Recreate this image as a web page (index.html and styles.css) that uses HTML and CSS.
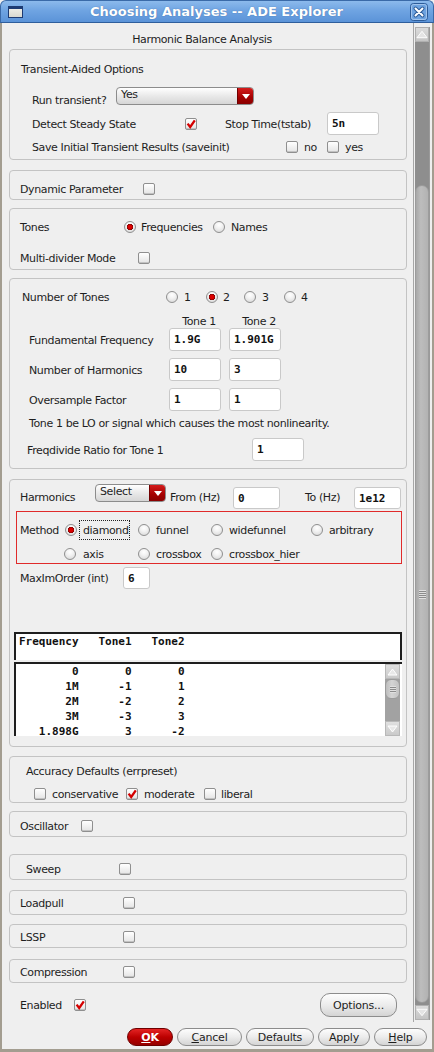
FILE: index.html
```html
<!DOCTYPE html>
<html>
<head>
<meta charset="utf-8">
<title>Choosing Analyses -- ADE Explorer</title>
<link rel="stylesheet" href="styles.css">
</head>
<body>
<div class="window">
  <header class="titlebar">
    <span class="win-icon"></span>
    <span class="title">Choosing Analyses -- ADE Explorer</span>
    <span class="close-btn">
      <svg width="18" height="18" viewBox="0 0 18 18">
        <rect x="0.5" y="0.5" width="17" height="17" rx="3" fill="#6ea3e0" stroke="#2d5c99"/>
        <rect x="1.5" y="1.5" width="15" height="15" rx="2" fill="none" stroke="#b6d1f2" stroke-opacity="0.7"/>
        <path d="M5.5 5.5 L12.5 12.5 M12.5 5.5 L5.5 12.5" stroke="#2d5c99" stroke-width="4" stroke-linecap="round"/>
        <path d="M5.5 5.5 L12.5 12.5 M12.5 5.5 L5.5 12.5" stroke="#ffffff" stroke-width="2" stroke-linecap="round"/>
      </svg>
    </span>
  </header>
  <div class="frame">
    <div class="scrollarea">
      <div class="content">
        <div class="page-title">Harmonic Balance Analysis</div>

        <section class="sec sec-trans">
          <div class="sec-title">Transient-Aided Options</div>
          <div class="row r-run">
            <span class="lbl lbl-low w-run">Run transient?</span>
            <div class="dd dd-yes"><span class="dd-text">Yes</span><span class="dd-btn"><svg width="8" height="5" viewBox="0 0 8 5"><path d="M0 0 H8 L4 5 Z" fill="#fff"/></svg></span></div>
          </div>
          <div class="row r-detect">
            <span class="lbl w-detect">Detect Steady State</span>
            <span class="cb"><svg width="10" height="10" viewBox="0 0 10 10"><path d="M1.6 4.6 L4.2 8 L8.8 1.4" fill="none" stroke="#d40000" stroke-width="2.3"/></svg></span>
            <span class="lbl w-stop">Stop Time(tstab)</span>
            <span class="in w-in52">5n</span>
          </div>
          <div class="row r-save">
            <span class="lbl w-save">Save Initial Transient Results (saveinit)</span>
            <span class="cb"></span>
            <span class="lbl opt w-no">no</span>
            <span class="cb"></span>
            <span class="lbl opt">yes</span>
          </div>
        </section>

        <section class="sec sec-dyn">
          <div class="row pl10">
            <span class="lbl w-dyn">Dynamic Parameter</span>
            <span class="cb"></span>
          </div>
        </section>

        <section class="sec sec-tones">
          <div class="row pl10">
            <span class="lbl w-tones">Tones</span>
            <span class="rb on"></span>
            <span class="lbl opt w-freqs">Frequencies</span>
            <span class="rb"></span>
            <span class="lbl opt">Names</span>
          </div>
          <div class="row pl10 r-multi">
            <span class="lbl w-multi">Multi-divider Mode</span>
            <span class="cb"></span>
          </div>
        </section>

        <section class="sec sec-num">
          <div class="row pl12">
            <span class="lbl w-numt">Number of Tones</span>
            <span class="rb"></span><span class="lbl opt w-n">1</span>
            <span class="rb on"></span><span class="lbl opt w-n2">2</span>
            <span class="rb"></span><span class="lbl opt w-n">3</span>
            <span class="rb"></span><span class="lbl opt w-n2">4</span>
          </div>
          <div class="row r-tonehead">
            <span class="tonehead">Tone 1</span>
            <span class="tonehead">Tone 2</span>
          </div>
          <div class="row r-field">
            <span class="lbl w-field">Fundamental Frequency</span>
            <span class="in w-in52">1.9G</span>
            <span class="in w-in52">1.901G</span>
          </div>
          <div class="row r-field mt7">
            <span class="lbl w-field">Number of Harmonics</span>
            <span class="in w-in52">10</span>
            <span class="in w-in52">3</span>
          </div>
          <div class="row r-field mt7">
            <span class="lbl w-field">Oversample Factor</span>
            <span class="in w-in52">1</span>
            <span class="in w-in52">1</span>
          </div>
          <div class="row r-note">
            <span class="lbl">Tone 1 be LO or signal which causes the most nonlinearity.</span>
          </div>
          <div class="row r-fdiv">
            <span class="lbl w-fdiv">Freqdivide Ratio for Tone 1</span>
            <span class="in w-in52">1</span>
          </div>
        </section>

        <section class="sec sec-harm">
          <div class="row r-harm">
            <span class="lbl lbl-mid w-harm">Harmonics</span>
            <div class="dd dd-sel"><span class="dd-text">Select</span><span class="dd-btn"><svg width="8" height="5" viewBox="0 0 8 5"><path d="M0 0 H8 L4 5 Z" fill="#fff"/></svg></span></div>
            <span class="lbl lbl-mid w-from">From (Hz)</span>
            <span class="in in-mid w-in47">0</span>
            <span class="lbl lbl-mid w-to">To (Hz)</span>
            <span class="in in-mid w-in47">1e12</span>
          </div>
          <div class="method-box">
            <div class="row r-m1">
              <span class="lbl w-method">Method</span>
              <span class="rb on"></span>
              <span class="focus">diamond</span>
              <span class="rb ml8"></span><span class="lbl opt w-m">funnel</span>
              <span class="rb"></span><span class="lbl opt w-wide">widefunnel</span>
              <span class="rb"></span><span class="lbl opt">arbitrary</span>
            </div>
            <div class="row r-m2">
              <span class="rb"></span><span class="lbl opt-axis w-axis">axis</span>
              <span class="rb"></span><span class="lbl opt w-m">crossbox</span>
              <span class="rb"></span><span class="lbl opt">crossbox_hier</span>
            </div>
          </div>
          <div class="row r-maxim">
            <span class="lbl w-maxim">MaxImOrder (int)</span>
            <span class="in in-small">6</span>
          </div>
          <div class="tbl-head">Frequency   Tone1   Tone2</div>
          <div class="tbl-body">
<pre class="tbl-rows">        0       0       0
       1M      -1       1
       2M      -2       2
       3M      -3       3
   1.898G       3      -2</pre>
            <div class="mini-scroll">
              <div class="mini-arrow"><svg width="11" height="8" viewBox="0 0 11 8"><path d="M1 7 L5.5 1 L10 7 Z" fill="#e8e8e8" stroke="#fff"/></svg></div>
              <div class="mini-thumb"><span class="grip"></span></div>
              <div class="mini-track"></div>
              <div class="mini-arrow"><svg width="11" height="8" viewBox="0 0 11 8"><path d="M1 1 L5.5 7 L10 1 Z" fill="#e8e8e8" stroke="#fff"/></svg></div>
            </div>
          </div>
        </section>

        <section class="sec sec-acc">
          <div class="row pl16">
            <span class="lbl">Accuracy Defaults (errpreset)</span>
          </div>
          <div class="row r-acc">
            <span class="cb"></span><span class="lbl opt w-cons">conservative</span>
            <span class="cb"><svg width="10" height="10" viewBox="0 0 10 10"><path d="M1.6 4.6 L4.2 8 L8.8 1.4" fill="none" stroke="#d40000" stroke-width="2.3"/></svg></span><span class="lbl opt w-mod">moderate</span>
            <span class="cb"></span><span class="lbl opt-lib">liberal</span>
          </div>
        </section>

        <section class="sec sec-osc">
          <div class="row pl10">
            <span class="lbl w-osc">Oscillator</span>
            <span class="cb"></span>
          </div>
        </section>

        <section class="sec sec-sweep">
          <div class="row pl16">
            <span class="lbl w-sweep">Sweep</span>
            <span class="cb"></span>
          </div>
        </section>

        <section class="sec sec-load">
          <div class="row pl10">
            <span class="lbl w-simple">Loadpull</span>
            <span class="cb"></span>
          </div>
        </section>

        <section class="sec sec-lssp">
          <div class="row pl10">
            <span class="lbl w-simple">LSSP</span>
            <span class="cb"></span>
          </div>
        </section>

        <section class="sec sec-comp">
          <div class="row pl10">
            <span class="lbl w-simple">Compression</span>
            <span class="cb"></span>
          </div>
        </section>

        <div class="row r-enabled">
          <span class="lbl w-enabled">Enabled</span>
          <span class="cb"><svg width="10" height="10" viewBox="0 0 10 10"><path d="M1.6 4.6 L4.2 8 L8.8 1.4" fill="none" stroke="#d40000" stroke-width="2.3"/></svg></span>
          <button class="btn btn-options">Options...</button>
        </div>
      </div>

      <div class="vscroll">
        <div class="vtrack">
          <div class="varrow"><svg width="13" height="9" viewBox="0 0 13 9"><path d="M1 8 L6.5 1 L12 8 Z" fill="#e4e4e4" stroke="#fff"/></svg></div>
          <div class="vthumb"><span class="grip"></span></div>
          <div class="varrow"><svg width="13" height="9" viewBox="0 0 13 9"><path d="M1 1 L6.5 8 L12 1 Z" fill="#e4e4e4" stroke="#fff"/></svg></div>
        </div>
      </div>
    </div>

    <div class="buttonbar">
      <button class="btn btn-ok"><u>O</u>K</button>
      <button class="btn btn-cancel"><u>C</u>ancel</button>
      <button class="btn btn-defaults">Defaults</button>
      <button class="btn btn-apply">Apply</button>
      <button class="btn btn-help"><u>H</u>elp</button>
    </div>
  </div>
</div>
</body>
</html>
```
FILE: styles.css
```css
* { box-sizing: border-box; }

html, body {
  margin: 0;
  padding: 0;
  width: 434px;
  height: 1052px;
  overflow: hidden;
  background: #efefef;
}

body {
  font-family: "DejaVu Sans", "Liberation Sans", sans-serif;
  font-size: 11px;
  letter-spacing: -0.38px;
  color: #1e1e1e;
}

.window {
  width: 434px;
  height: 1052px;
  display: flex;
  flex-direction: column;
}

/* ---------- title bar ---------- */
.titlebar {
  height: 23px;
  flex: none;
  display: flex;
  align-items: center;
  padding: 0 5px 0 7px;
  background: linear-gradient(#8cbaec 0%, #6fa4e2 45%, #5b93d8 100%);
  border: 1px solid #3a6aa8;
  border-bottom-color: #2f5e9c;
  border-radius: 6px 6px 0 0;
}

.win-icon {
  width: 15px;
  height: 12px;
  flex: none;
  border: 1px solid #1d3b73;
  background: linear-gradient(#1d3b73 0, #1d3b73 2px, #ecece6 2px, #d8d8d0 100%);
}

.title {
  flex: 1;
  text-align: center;
  font-weight: bold;
  font-size: 13px;
  letter-spacing: 0;
  color: #ffffff;
  text-shadow: 0 0 1px rgba(20, 50, 100, 0.5);
}

.close-btn {
  width: 18px;
  height: 18px;
  flex: none;
  display: flex;
}

/* ---------- frame ---------- */
.frame {
  flex: 1;
  display: flex;
  flex-direction: column;
  border-left: 2px solid #a39d90;
  border-right: 2px solid #a39d90;
  border-bottom: 3px solid #a39d90;
  background: #efefef;
}

.scrollarea {
  height: 999px;
  flex: none;
  display: flex;
}

.content {
  width: 411px;
  flex: none;
  padding-left: 7px;
  overflow: hidden;
  display: flex;
  flex-direction: column;
}

.page-title {
  padding: 10px 12px 0 0;
  height: 26px;
  line-height: 14px;
  text-align: center;
  width: 398px;
}

/* ---------- scrollbar ---------- */
.vscroll {
  width: 19px;
  flex: none;
  padding: 4px 2px 2px 1px;
  border-left: 1px solid #a6a6a6;
}

.vtrack {
  height: 100%;
  display: flex;
  flex-direction: column;
  background: #8e8e8e;
  border-right: 1px solid #9a9a9a;
}

.varrow {
  height: 15px;
  flex: none;
  background: linear-gradient(#dcdcdc, #c4c4c4);
  border: 1px solid #b0b0b0;
  display: flex;
  align-items: center;
  justify-content: center;
}

.vthumb {
  flex: 1;
  margin: 143px 0 2px 0;
  background: linear-gradient(90deg, #a8a8a8, #bdbdbd 40%, #b2b2b2);
  border: 1px solid #9c9c9c;
  border-radius: 7px;
  display: flex;
  align-items: center;
  justify-content: center;
}

.grip {
  width: 7px;
  height: 9px;
  background: repeating-linear-gradient(#e0e0e0 0, #e0e0e0 1px, #8c8c8c 1px, #8c8c8c 2px);
}

/* ---------- sections ---------- */
.sec {
  width: 398px;
  flex: none;
  border: 1px solid #c3c3c3;
  border-radius: 4px;
  display: flex;
  flex-direction: column;
}

.row {
  display: flex;
  align-items: center;
  height: 14px;
  line-height: 14px;
  flex: none;
}

.lbl {
  flex: none;
  white-space: nowrap;
  height: 14px;
  line-height: 12px;
  padding-top: 2px;
}

.pl10 { padding-left: 10px; }
.pl12 { padding-left: 12px; }
.pl16 { padding-left: 16px; }
.mt7 { margin-top: 7px; }
.ml8 { margin-left: 8px; }

.opt { margin-left: 6px; }

/* section 1 */
.sec-trans { height: 111px; padding-top: 11px; }
.sec-title { height: 16px; line-height: 16px; padding-left: 11px; padding-top: 1px; }
.r-run { margin-top: 10px; height: 18px; padding-left: 22px; align-items: flex-start; }
.lbl-low { margin-top: 6px; }
.w-run { width: 84px; }
.r-detect { margin-top: 7px; height: 23px; padding-left: 22px; }
.w-detect { width: 153px; }
.w-stop { width: 102px; margin-left: 28px; }
.r-save { margin-top: 5px; padding-left: 22px; }
.w-save { width: 254px; }
.w-no { width: 23px; }

/* dropdowns */
.dd {
  display: flex;
  height: 18px;
  flex: none;
  border: 1px solid #8c8c8c;
  border-radius: 4px;
  background: linear-gradient(#ffffff, #e9e9e9 50%, #d6d6d6);
  overflow: hidden;
}
.dd-text { flex: 1; padding-left: 4px; line-height: 14px; }
.dd-btn {
  width: 16px;
  flex: none;
  display: flex;
  align-items: center;
  justify-content: center;
  background: linear-gradient(#d41c1c, #a40000 60%, #8a0000);
  border-left: 1px solid #700000;
}
.dd-yes { width: 138px; }
.dd-sel { width: 71px; }

/* inputs */
.in {
  flex: none;
  height: 23px;
  line-height: 22px;
  padding-left: 4px;
  background: #ffffff;
  border: 1px solid #c9c9c9;
  border-radius: 3px;
  font-family: "DejaVu Sans Mono", "Liberation Mono", monospace;
  font-weight: bold;
  font-size: 11px;
  letter-spacing: 0;
  color: #111;
}
.w-in52 { width: 52px; }
.w-in47 { width: 47px; height: 22px; line-height: 21px; }
.in-small { width: 27px; height: 22px; line-height: 21px; }

/* checkbox / radio */
.cb {
  width: 12px;
  height: 12px;
  flex: none;
  border: 1px solid #8f8f8f;
  border-radius: 2px;
  background: linear-gradient(#ffffff, #e4e4e4);
  box-shadow: inset 0 -1px 0 #c2c2c2;
  display: flex;
  align-items: center;
  justify-content: center;
}

.rb {
  width: 12px;
  height: 12px;
  flex: none;
  border: 1px solid #8f8f8f;
  border-radius: 50%;
  background: radial-gradient(circle at 50% 30%, #ffffff 0, #f2f2f2 40%, #d4d4d4 100%);
}
.rb.on {
  background:
    radial-gradient(circle at 50% 50%, #e60000 0, #d00000 2.2px, #7a0000 2.9px, transparent 3.4px),
    radial-gradient(circle at 50% 30%, #ffffff 0, #f2f2f2 40%, #d4d4d4 100%);
}

/* section 2 */
.sec-dyn { margin-top: 10px; height: 30px; padding-top: 11px; }
.w-dyn { width: 123px; }

/* section 3 */
.sec-tones { margin-top: 8px; height: 62px; padding-top: 11px; }
.w-tones { width: 104px; }
.w-freqs { width: 72px; margin-left: 5px; }
.r-multi { margin-top: 17px; }
.w-multi { width: 118px; }

/* section 4 */
.sec-num { margin-top: 8px; height: 191px; padding-top: 11px; }
.w-numt { width: 144px; }
.w-n { width: 22px; }
.w-n2 { width: 21px; margin-left: 5px; }
.r-tonehead { margin-top: 10px; padding-left: 159px; gap: 8px; }
.tonehead { width: 52px; padding-left: 8px; text-align: center; padding-top: 1px; }
.r-field { height: 23px; padding-left: 19px; gap: 8px; }
.w-field { width: 132px; }
.r-note { margin-top: 5px; padding-left: 19px; }
.r-fdiv { margin-top: 8px; height: 23px; padding-left: 17px; }
.w-fdiv { width: 225px; }

/* section 5 */
.sec-harm { margin-top: 10px; height: 268px; padding-top: 4px; padding-left: 3px; }
.r-harm { height: 25px; padding-left: 7px; align-items: flex-start; }
.lbl-mid { margin-top: 6px; }
.in-mid { margin-top: 3px; }
.w-harm { width: 75px; }
.w-from { width: 63px; margin-left: 4px; }
.w-to { width: 49px; margin-left: 25px; }

.method-box {
  margin-top: 2px;
  margin-left: 3px;
  width: 386px;
  height: 53px;
  border: 1px solid #e02a2a;
  padding-top: 8px;
  flex: none;
}
.r-m1 { height: 20px; padding-left: 3px; }
.w-method { width: 45px; }
.focus {
  margin-left: 2px;
  width: 51px;
  height: 20px;
  line-height: 19px;
  padding-left: 3px;
  border: 1px dotted #222;
  flex: none;
}
.w-m { width: 55px; }
.w-wide { width: 82px; }
.r-m2 { margin-top: 7px; padding-left: 47px; }
.opt-axis { margin-left: 7px; }
.w-axis { width: 55px; }

.r-maxim { margin-top: 3px; height: 22px; padding-left: 7px; }
.w-maxim { width: 103px; }

.tbl-head {
  margin-top: 43px;
  margin-left: 1px;
  width: 388px;
  height: 28px;
  flex: none;
  background: #ffffff;
  border-top: 2px solid #1e1e1e;
  border-left: 2px solid #1e1e1e;
  border-right: 2px solid #1e1e1e;
  padding: 1px 0 0 3px;
  line-height: 14px;
  white-space: pre;
  font-family: "DejaVu Sans Mono", "Liberation Mono", monospace;
  font-weight: bold;
  font-size: 11px;
  letter-spacing: 0;
  color: #111;
}

.tbl-body {
  margin-top: 2px;
  margin-left: 1px;
  width: 388px;
  height: 74px;
  flex: none;
  display: flex;
  background: #ffffff;
  border-top: 2px solid #1e1e1e;
  border-left: 2px solid #1e1e1e;
  overflow: hidden;
}

.tbl-rows {
  flex: 1;
  margin: 0;
  padding-left: 3px;
  line-height: 15px;
  font-family: "DejaVu Sans Mono", "Liberation Mono", monospace;
  font-weight: bold;
  font-size: 11px;
  letter-spacing: 0;
  color: #111;
}

.mini-scroll {
  width: 15px;
  flex: none;
  margin-right: 2px;
  display: flex;
  flex-direction: column;
  background: #a2a2a2;
}
.mini-arrow {
  height: 15px;
  flex: none;
  background: linear-gradient(#e0e0e0, #cacaca);
  border: 1px solid #b8b8b8;
  display: flex;
  align-items: center;
  justify-content: center;
}
.mini-thumb {
  height: 20px;
  flex: none;
  background: linear-gradient(90deg, #bdbdbd, #d4d4d4 45%, #c2c2c2);
  border: 1px solid #9c9c9c;
  border-radius: 6px;
  display: flex;
  align-items: center;
  justify-content: center;
}
.mini-thumb .grip { width: 6px; height: 7px; }
.mini-track { flex: 1; }

/* section 6 */
.sec-acc { margin-top: 9px; height: 47px; padding-top: 7px; }
.r-acc { margin-top: 9px; padding-left: 24px; }
.w-cons { width: 74px; }
.w-mod { width: 60px; }
.opt-lib { margin-left: 5px; }

.sec-osc { margin-top: 8px; height: 26px; padding-top: 7px; }
.w-osc { width: 61px; }

.sec-sweep { margin-top: 17px; height: 26px; padding-top: 7px; }
.w-sweep { width: 93px; }

.sec-load { margin-top: 10px; height: 25px; padding-top: 5px; }
.sec-lssp { margin-top: 9px; height: 24px; padding-top: 5px; }
.sec-comp { margin-top: 11px; height: 24px; padding-top: 5px; }
.w-simple { width: 103px; }

.r-enabled {
  margin-top: 10px;
  height: 24px;
  width: 398px;
  padding-left: 11px;
  padding-right: 10px;
}
.w-enabled { width: 54px; }

/* ---------- buttons ---------- */
.btn {
  font-family: "DejaVu Sans", "Liberation Sans", sans-serif;
  font-size: 11px;
  letter-spacing: -0.2px;
  color: #1e1e1e;
  height: 18px;
  padding: 1px 0 0 0;
  line-height: 15px;
  border: 1px solid #8c8c8c;
  border-radius: 9px;
  background: linear-gradient(#fdfdfd, #ececec 50%, #d4d4d4);
  text-align: center;
  flex: none;
}
.btn u { text-decoration: underline; }

.btn-options {
  margin-left: auto;
  width: 77px;
  height: 24px;
  line-height: 21px;
  border-radius: 10px;
}

.buttonbar {
  flex: 1;
  display: flex;
  justify-content: flex-end;
  align-items: flex-start;
  gap: 4px;
  padding: 6px 5px 0 0;
}
.btn-ok {
  width: 46px;
  color: #ffffff;
  font-weight: bold;
  border-color: #6e0000;
  background: linear-gradient(#e42424, #bc0000 50%, #960000);
}
.btn-cancel { width: 65px; }
.btn-defaults { width: 68px; }
.btn-apply { width: 52px; }
.btn-help { width: 53px; }
```
